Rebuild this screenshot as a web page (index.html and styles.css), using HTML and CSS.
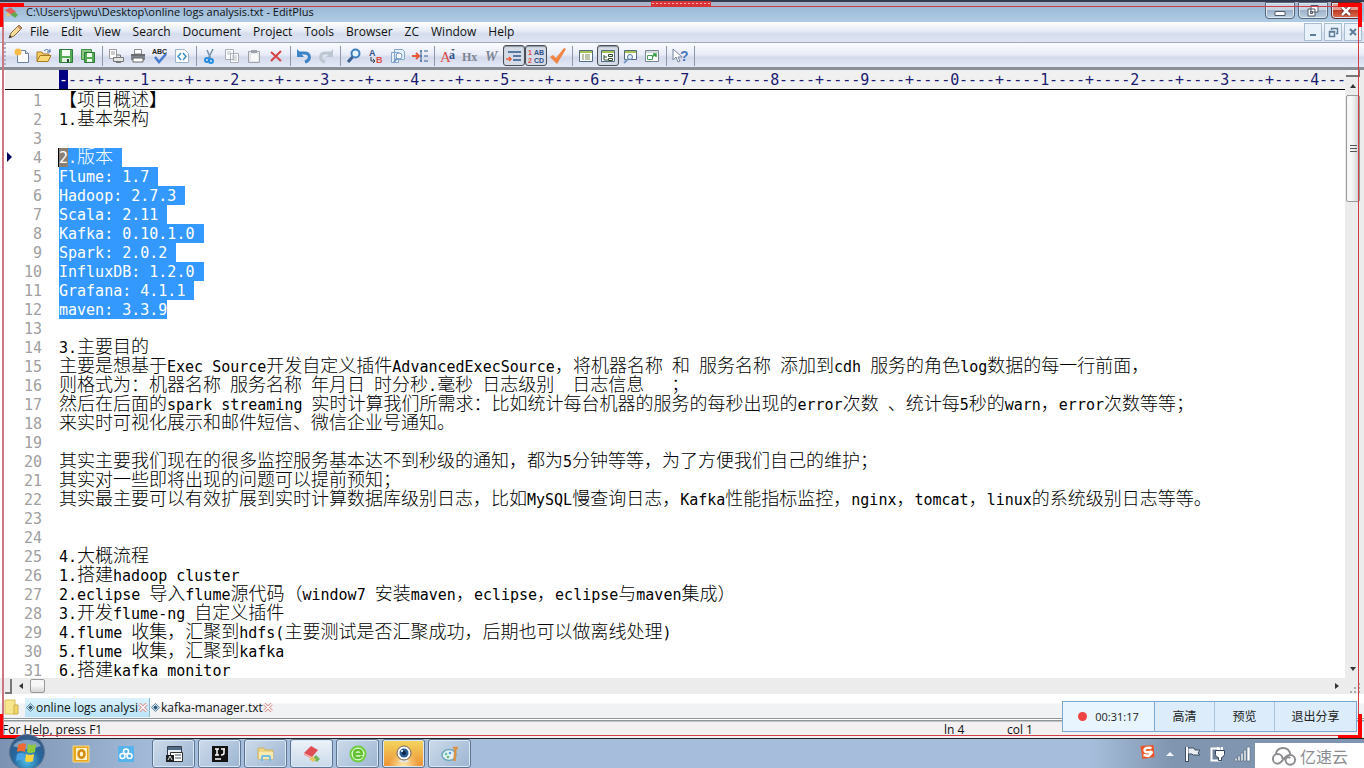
FILE: index.html
```html
<!DOCTYPE html>
<html lang="zh-CN">
<head>
<meta charset="utf-8">
<title>C:\Users\jpwu\Desktop\online logs analysis.txt - EditPlus</title>
<link rel="stylesheet" href="styles.css">
</head>
<body>
<div class="desktop">
<main class="window">
  <header class="titlebar">
    <svg class="app-icon" viewBox="0 0 16 14"><path d="M1 5l6-3 6 5-5 3z" fill="#e55a5a"/><path d="M7 10l4-3 4 3-3 3z" fill="#5faa4c"/><path d="M2 9l3-1 2 3-3 1z" fill="#e8c46c"/></svg>
    <h1 class="title">C:\Users\jpwu\Desktop\online logs analysis.txt - EditPlus</h1>
    <div class="window-buttons">
      <button aria-label="Minimize"><svg viewBox="0 0 16 12"><path d="M3 6.500h10v4H3z" fill="#fff" stroke="#535b68"/></svg></button>
      <button aria-label="Restore"><svg viewBox="0 0 16 12"><path d="M6 .5h7v6.500H6z M3 4h7v7H3z" fill="#fff" stroke="#535b68"/><path d="M5.500 6.500h2v2h-2z" fill="#9fb3c9" stroke="#535b68"/></svg></button>
      <button class="close" aria-label="Close"><svg viewBox="0 0 16 12"><path d="M4 2l8 8M12 2l-8 8" stroke="#642b2b" stroke-width="4"/><path d="M4 2l8 8M12 2l-8 8" stroke="#fff" stroke-width="2.500"/></svg></button>
    </div>
  </header>
  <nav class="menubar">
    <svg class="menu-icon" viewBox="0 0 16 16"><path d="M2 14l2-5L12 1l3 3-8 8z" fill="#f6dc9a" stroke="#8a6a3c"/><path d="M2 14l1-3 2 2z" fill="#333"/><path d="M11 2l3 3" stroke="#c78a68" stroke-width="2"/></svg>
    <button>File</button><button>Edit</button><button>View</button><button>Search</button><button>Document</button><button>Project</button><button>Tools</button><button>Browser</button><button>ZC</button><button>Window</button><button>Help</button>
    <div class="mdi-buttons">
      <button aria-label="Minimize document"><svg viewBox="0 0 12 12"><path d="M3 9h6" stroke="#5d7d99" stroke-width="2"/></svg></button>
      <button aria-label="Restore document"><svg viewBox="0 0 12 12"><path d="M4.500 4V2.500h6v5H9M2.500 5.500h5v5h-5z M2 6h6" fill="none" stroke="#5d7d99" stroke-width="1.500"/></svg></button>
      <button aria-label="Close document"><svg viewBox="0 0 12 12"><path d="M3 3l6 6M9 3l-6 6" stroke="#5d7d99" stroke-width="2"/></svg></button>
    </div>
  </nav>
  <div class="toolbar" role="toolbar">
    <button aria-label="New"><svg viewBox="0 0 16 16"><path d="M3.500 2.500h8l3 3v9h-11z" fill="#fff" stroke="#6d82a3"/><path d="M11.500 2.500v3h3" fill="#dde" stroke="#6d82a3"/><circle cx="4" cy="4" r="3.500" fill="#f8bd49"/></svg></button>
    <button aria-label="Open"><svg viewBox="0 0 16 16"><path d="M1 13V4h5l1 2h6v2" fill="#f6cf63" stroke="#a87a25"/><path d="M1 13.500l3-6h11l-3 6z" fill="#fbd976" stroke="#a87a25"/><path d="M8 3c2-2 4-2 6 1M14 1v3h-3" fill="none" stroke="#456b9c"/></svg></button>
    <button aria-label="Save"><svg viewBox="0 0 16 16"><path d="M1.500 1.500h13v13h-13z" fill="#56ab55" stroke="#2e7a3a"/><path d="M4 2h8v6H4z" fill="#f4fff2"/><path d="M4 10h8v4H4z" fill="#e4eee3"/><path d="M9 11h2v3H9z" fill="#254b35"/></svg></button>
    <button aria-label="Save all"><svg viewBox="0 0 16 16"><path d="M1.500 1.500h10v10h-10z" fill="#8bc985" stroke="#3f9146"/><path d="M4.500 4.500h10v10h-10z" fill="#56ab55" stroke="#2e7a3a"/><path d="M7 5h5v4H7zM7 11h5v3H7z" fill="#f4fff2"/></svg></button>
    <hr>
    <button aria-label="Print preview"><svg viewBox="0 0 16 16"><path d="M1.500 1.500h7v9h-7z" fill="#fff" stroke="#999"/><path d="M3 4h4M3 6h4" stroke="#999"/><path d="M5.500 9.500h10v4h-10z M8.500 7h4v2.500M8 14.500h5" fill="#e4e4e4" stroke="#777"/></svg></button>
    <button aria-label="Print"><svg viewBox="0 0 16 16"><path d="M4.500 1.500h7V6h-7z" fill="#fff" stroke="#888"/><path d="M1 6h14v6H1z" fill="#7f838b"/><path d="M3 10h10v4H3z" fill="#fff" stroke="#666"/><path d="M1 7h14" stroke="#555"/></svg></button>
    <button aria-label="Spell check"><svg viewBox="0 0 16 16"><text x="0" y="6" class="glyph tiny">ABC</text><path d="M3 9l4 5 7-8" fill="none" stroke="#477bd0" stroke-width="2.500"/></svg></button>
    <button aria-label="View in browser"><svg viewBox="0 0 16 16"><path d="M1.500 1.500h9l4 4v9h-13z" fill="#fff" stroke="#9db2c8"/><path d="M7 5L4 8.500 7 12M9 5l3 3.500L9 12" fill="none" stroke="#3d91cf" stroke-width="1.500"/></svg></button>
    <hr>
    <button aria-label="Cut"><svg viewBox="0 0 16 16"><path d="M11 1L6 11M5 2l4 9" stroke="#7390a8" stroke-width="1.500"/><circle cx="5" cy="12" r="2" fill="none" stroke="#258ee0" stroke-width="2"/><circle cx="9" cy="13" r="2" fill="none" stroke="#258ee0" stroke-width="2"/></svg></button>
    <button aria-label="Copy"><svg viewBox="0 0 16 16"><path d="M1.500 1.500h8v10h-8z M6.500 5.500h8v9h-8z" fill="#fff" stroke="#a8aeb8"/><path d="M8 8h5M8 10h5M8 12h5M3 4h4M3 6h3" stroke="#b7bbc3"/></svg></button>
    <button aria-label="Paste"><svg viewBox="0 0 16 16"><path d="M2.500 3.500h11v11h-11z" fill="#e4e6ea" stroke="#9da2ab"/><path d="M5 2h6v3H5z" fill="#9da2ab"/><path d="M5 6h7v7H5z" fill="#f8f8f8"/></svg></button>
    <button aria-label="Delete"><svg viewBox="0 0 16 16"><path d="M3 4l10 9M13 3L3 13" stroke="#d64343" stroke-width="2"/></svg></button>
    <hr>
    <button aria-label="Undo"><svg viewBox="0 0 16 16"><path d="M3 5h5c7 0 7 7 1 9" fill="none" stroke="#3b82c8" stroke-width="3"/><path d="M1 1v8h7z" fill="#3b82c8"/></svg></button>
    <button aria-label="Redo"><svg viewBox="0 0 16 16"><path d="M13 5H8c-7 0-7 7-1 9" fill="none" stroke="#bcc6d0" stroke-width="3"/><path d="M15 1v8H8z" fill="#bcc6d0"/></svg></button>
    <hr>
    <button aria-label="Find"><svg viewBox="0 0 16 16"><circle cx="9.500" cy="5.500" r="4" fill="#e4f4ff" stroke="#3d7dbf" stroke-width="2"/><path d="M6.500 9L2 14" stroke="#365e91" stroke-width="3"/></svg></button>
    <button aria-label="Replace"><svg viewBox="0 0 16 16"><text x="1" y="8" class="glyph navy">A</text><text x="8" y="15" class="glyph red">B</text><path d="M3 9v4h4M5 11l2 2-2 2" fill="none" stroke="#345"/></svg></button>
    <button aria-label="Find in files"><svg viewBox="0 0 16 16"><path d="M4.500 1.500h8l2 2v8h-10z M1.500 4.500h7v10h-7z" fill="#e5f0fb" stroke="#85a6ca"/><circle cx="9" cy="8" r="3" fill="#fff" stroke="#6d96c5"/><path d="M7 10l-3 4" stroke="#6d96c5" stroke-width="2"/></svg></button>
    <button aria-label="Go to line"><svg viewBox="0 0 16 16"><path d="M0 8h6M4 5l3 3-3 3" fill="none" stroke="#e85a36" stroke-width="2"/><path d="M8 3h2M8 8h2M8 13h2M9 2v12M12 3h4M12 8h4M12 13h4" stroke="#345c92"/></svg></button>
    <hr>
    <button aria-label="Font"><svg viewBox="0 0 16 16"><text x="0" y="14" class="glyph serif red">A</text><text x="9" y="11" class="glyph serif-small navy">a</text><path d="M11 1h4l-2 2z" fill="#567"/></svg></button>
    <button aria-label="Hex viewer"><svg viewBox="0 0 16 16"><text x="0" y="13" class="glyph serif-small gray">Hx</text></svg></button>
    <button aria-label="Word wrap"><svg viewBox="0 0 16 16"><text x="1" y="13" class="glyph serif-italic gray">W</text></svg></button>
    <button class="pressed" aria-label="Auto indent" aria-pressed="true"><svg viewBox="0 0 16 16"><path d="M2 4h13M7 8h8M7 12h8" stroke="#305890" stroke-width="1.500"/><path d="M0 11h5M3 9l2 2-2 2" fill="none" stroke="#e65f38" stroke-width="1.500"/></svg></button>
    <button class="pressed" aria-label="Line numbers" aria-pressed="true"><svg viewBox="0 0 16 16"><text x="0" y="7" class="glyph tiny red">1</text><text x="6" y="7" class="glyph tiny navy">AB</text><text x="0" y="15" class="glyph tiny red">2</text><text x="6" y="15" class="glyph tiny navy">CD</text></svg></button>
    <button aria-label="Preferences"><svg viewBox="0 0 16 16"><path d="M0 9l3-2 3 3 8-10 2 1L7 16z" fill="#f08444"/></svg></button>
    <hr>
    <button aria-label="Cliptext"><svg viewBox="0 0 16 16"><path d="M1.500 2.500h13v11h-13z" fill="#fff" stroke="#526b82"/><path d="M2 3h12v2H2z" fill="#a5c253"/><path d="M4 7h2M4 9h2M4 11h2M7 7h5M7 9h5M7 11h5" stroke="#798b57"/></svg></button>
    <button class="pressed" aria-label="Directory" aria-pressed="true"><svg viewBox="0 0 16 16"><path d="M1.500 2.500h13v11h-13z" fill="#fff" stroke="#526b82"/><path d="M2 3h12v2H2z" fill="#a5c253"/><path d="M4 7v5h4M4 9h3M8.500 6.500h4v2h-4zM8.500 10.500h4v2h-4z" fill="none" stroke="#354f30"/></svg></button>
    <button aria-label="Output window"><svg viewBox="0 0 16 16"><path d="M2.500 2.500h12v9h-12z" fill="#fff" stroke="#526b82"/><path d="M3 3h11v2H3z" fill="#a5c253"/><circle cx="8" cy="9" r="2.500" fill="#e1efff" stroke="#587da8"/><path d="M6 11l-4 4" stroke="#7d9dc4" stroke-width="2"/></svg></button>
    <button aria-label="New window"><svg viewBox="0 0 16 16"><path d="M1.500 2.500h13v11h-13z" fill="#fff" stroke="#7a8790"/><path d="M2 4h12" stroke="#aab4bc"/><path d="M3.500 7.500h5v4h-5z" fill="none" stroke="#4a9b55"/><path d="M8 9l4-3M9 6h3v3" fill="none" stroke="#35a044" stroke-width="1.500"/></svg></button>
    <hr>
    <button aria-label="Context help"><svg viewBox="0 0 16 16"><path d="M1 1v11l3-3 2 5 2-1-2-4h4z" fill="#fff" stroke="#7385a0"/><text x="8" y="13" class="glyph help">?</text></svg></button>
    <hr>
  </div>
  <section class="workspace">
    <div class="document">
      <div class="ruler" aria-hidden="true"><span><mark>-</mark>---+----1</span><span>----+----2</span><span>----+----3</span><span>----+----4</span><span>----+----5</span><span>----+----6</span><span>----+----7</span><span>----+----8</span><span>----+----9</span><span>----+----0</span><span>----+----1</span><span>----+----2</span><span>----+----3</span><span>----+----4</span><span>---</span></div>
      <ol class="lines">
        <li><code><b>【项目概述】</b></code></li>
        <li><code>1.<b>基本架构</b></code></li>
        <li><code></code></li>
        <li class="current"><code><mark><i class="caret">2</i>.<b>版本</b> </mark></code></li>
        <li><code><mark>Flume: 1.7 </mark></code></li>
        <li><code><mark>Hadoop: 2.7.3 </mark></code></li>
        <li><code><mark>Scala: 2.11 </mark></code></li>
        <li><code><mark>Kafka: 0.10.1.0 </mark></code></li>
        <li><code><mark>Spark: 2.0.2 </mark></code></li>
        <li><code><mark>InfluxDB: 1.2.0 </mark></code></li>
        <li><code><mark>Grafana: 4.1.1 </mark></code></li>
        <li><code><mark>maven: 3.3.9</mark></code></li>
        <li><code></code></li>
        <li><code>3.<b>主要目的</b></code></li>
        <li><code><b>主要是想基于</b>Exec Source<b>开发自定义插件</b>AdvancedExecSource<b>，将机器名称</b> <b>和</b> <b>服务名称</b> <b>添加到</b>cdh <b>服务的角色</b>log<b>数据的每一行前面，</b></code></li>
        <li><code><b>则格式为：机器名称</b> <b>服务名称</b> <b>年月日</b> <b>时分秒</b>.<b>毫秒</b> <b>日志级别</b>  <b>日志信息</b>   <b>；</b></code></li>
        <li><code><b>然后在后面的</b>spark streaming <b>实时计算我们所需求：比如统计每台机器的服务的每秒出现的</b>error<b>次数</b> <b>、统计每</b>5<b>秒的</b>warn<b>，</b>error<b>次数等等；</b></code></li>
        <li><code><b>来实时可视化展示和邮件短信、微信企业号通知。</b></code></li>
        <li><code></code></li>
        <li><code><b>其实主要我们现在的很多监控服务基本达不到秒级的通知，都为</b>5<b>分钟等等，为了方便我们自己的维护；</b></code></li>
        <li><code><b>其实对一些即将出现的问题可以提前预知；</b></code></li>
        <li><code><b>其实最主要可以有效扩展到实时计算数据库级别日志，比如</b>MySQL<b>慢查询日志，</b>Kafka<b>性能指标监控，</b>nginx<b>，</b>tomcat<b>，</b>linux<b>的系统级别日志等等。</b></code></li>
        <li><code></code></li>
        <li><code></code></li>
        <li><code>4.<b>大概流程</b></code></li>
        <li><code>1.<b>搭建</b>hadoop cluster</code></li>
        <li><code>2.eclipse <b>导入</b>flume<b>源代码（</b>window7 <b>安装</b>maven<b>，</b>eclipse<b>，</b>eclipse<b>与</b>maven<b>集成）</b></code></li>
        <li><code>3.<b>开发</b>flume-ng <b>自定义插件</b></code></li>
        <li><code>4.flume <b>收集，汇聚到</b>hdfs(<b>主要测试是否汇聚成功，后期也可以做离线处理</b>)</code></li>
        <li><code>5.flume <b>收集，汇聚到</b>kafka</code></li>
        <li><code>6.<b>搭建</b>kafka monitor</code></li>
      </ol>
    </div>
    <div class="vscroll"><span class="split"></span><button class="arrow up" aria-label="Scroll up"></button><div class="thumb"><i></i><i></i><i></i></div><button class="arrow down" aria-label="Scroll down"></button></div>
  </section>
  <div class="hscroll"><span class="split"></span><button class="arrow left" aria-label="Scroll left"></button><div class="thumb"></div><button class="arrow right" aria-label="Scroll right"></button><span class="grip"></span></div>
  <div class="tabs">
    <svg class="folder" viewBox="0 0 16 16"><path d="M1 1h10v14H1z" fill="#f8e68d" stroke="#dbc25e"/><path d="M10 6h4v9h-4z" fill="#f3d766" stroke="#c9ae4e"/></svg>
    <button class="tab active"><svg class="diamond" viewBox="0 0 10 10"><path d="M5 .5L9.500 5 5 9.500.5 5z" fill="#cfe4f2" stroke="#537a95"/><path d="M5 2.500L7.500 5 5 7.500 2.500 5z" fill="#28536e"/></svg><span>online logs analysi</span><svg class="tab-close" viewBox="0 0 10 10"><path d="M1 1l8 8M9 1L1 9" stroke="#d98b8b" stroke-width="3.500"/><path d="M1 1l8 8M9 1L1 9" stroke="#fff" stroke-width="1.500"/></svg></button>
    <button class="tab"><svg class="diamond" viewBox="0 0 10 10"><path d="M5 .5L9.500 5 5 9.500.5 5z" fill="#cfe4f2" stroke="#537a95"/><path d="M5 2.500L7.500 5 5 7.500 2.500 5z" fill="#28536e"/></svg><span>kafka-manager.txt</span><svg class="tab-close" viewBox="0 0 10 10"><path d="M1 1l8 8M9 1L1 9" stroke="#d98b8b" stroke-width="3.500"/><path d="M1 1l8 8M9 1L1 9" stroke="#fff" stroke-width="1.500"/></svg></button>
  </div>
  <footer class="statusbar"><span class="hint">For Help, press F1</span><span class="cell">ln 4</span><span class="cell">col 1</span><span class="rest"></span></footer>
  <div class="share-frame" aria-hidden="true"><i class="corner tl"></i><i class="corner tr"></i><i class="corner bl"></i><i class="corner br"></i><i class="handle"></i></div>
  <aside class="share-panel"><span class="timer"><i></i>00:31:17</span><button>高清</button><button>预览</button><button class="wide">退出分享</button></aside>
</main>
<footer class="taskbar">
  <button class="start" aria-label="Start"><svg viewBox="0 0 38 38"><defs><radialGradient id="orb" cx="50%" cy="75%" r="75%"><stop offset="0" stop-color="#4fc3e8"/><stop offset=".5" stop-color="#2668a0"/><stop offset="1" stop-color="#375780"/></radialGradient></defs><circle cx="19" cy="19" r="17.500" fill="url(#orb)" stroke="#5d7390"/><path d="M5 13a16 12 0 0 1 28 0q-14 6-28 0z" fill="#cfdeed" opacity=".5"/><path d="M10 12q4-3 8-1l-1 8q-4-2-8 0z" fill="#ef6b33"/><path d="M20 11q4 2 8 0l-1 8q-5 2-8 0z" fill="#8fc93f"/><path d="M9 21q4-2 8 0l-1 7q-4-2-8 0z" fill="#4aa3e8"/><path d="M18 21q4 2 8 0l-1 7q-4 2-8 0z" fill="#ffd33f"/></svg></button>
  <button class="pin" aria-label="Outlook"><svg viewBox="0 0 18 18"><path d="M1 1h16v16H1z" fill="#e9a91f" stroke="#f7d983"/><path d="M4 3h11v12H4z" fill="#fff3cc"/><ellipse cx="9.500" cy="9" rx="3" ry="3.800" fill="none" stroke="#d58b10" stroke-width="2.500"/></svg></button>
  <button class="pin" aria-label="Cloud drive"><svg viewBox="0 0 18 18"><path d="M1 1h16v16H1z" fill="#55b4ec"/><circle cx="5.500" cy="11" r="2.500" fill="none" stroke="#fff" stroke-width="1.500"/><circle cx="12.500" cy="11" r="2.500" fill="none" stroke="#fff" stroke-width="1.500"/><circle cx="9" cy="6.500" r="2.500" fill="none" stroke="#fff" stroke-width="1.500"/></svg></button>
  <div class="tasks">
    <button aria-label="Terminal"><svg viewBox="0 0 18 18"><path d="M2.500 1.500h14v10h-14z" fill="#e6edf4" stroke="#333c48"/><path d="M3 2h13v3H3z" fill="#526a86"/><path d="M5.500 7.500h12v9h-12z" fill="#fff" stroke="#333"/><path d="M1 10h8v7H1z" fill="#1d2022"/><path d="M3 15l2-4 2 4" fill="none" stroke="#ddd"/><path d="M10 10h6M10 13h6" stroke="#456"/></svg></button>
    <button aria-label="IntelliJ IDEA"><svg viewBox="0 0 18 18"><path d="M1 1h16v16H1z" fill="#121212"/><path d="M4 4h4M6 4v6M4 10h4M10 4h4M13 4v4q0 2-3 2M4 14h6" fill="none" stroke="#fff" stroke-width="1.500"/></svg></button>
    <button aria-label="Explorer"><svg viewBox="0 0 18 18"><path d="M1 3h6l1 2h8v9H1z" fill="#efd684" stroke="#cbb365"/><path d="M2 7h14v7H2z" fill="#f9eab2"/><path d="M4 16v-4q0-2 2-2h6q2 0 2 2v4h-2v-4H6v4z" fill="#74bce1"/></svg></button>
    <button class="lit" aria-label="EditPlus"><svg viewBox="0 0 18 18"><path d="M1 8l7-7 7 4-6 7z" fill="#df4d55"/><path d="M1 8l8 4v2L1 10z" fill="#f2a1a1"/><path d="M9 14l4-4 4 4-3 3z" fill="#73b75d"/><path d="M6 14l4-3 3 4-3 2z" fill="#e6c568"/></svg></button>
    <button aria-label="Browser"><svg viewBox="0 0 18 18"><circle cx="9" cy="9" r="7.500" fill="#e9ffe0" stroke="#6dcc3d" stroke-width="2"/><path d="M5 9h8q0-4-4-4T5 9t4 4q3 0 4-2" fill="none" stroke="#62c02f" stroke-width="2.500"/></svg></button>
    <button class="hot" aria-label="Webcam"><svg viewBox="0 0 18 18"><ellipse cx="9" cy="16" rx="5" ry="1.500" fill="#e8e5dc"/><circle cx="9" cy="8" r="7" fill="#fff" stroke="#656565"/><circle cx="9" cy="8" r="4.500" fill="#285b91"/><circle cx="9" cy="8" r="2" fill="#0a2244"/><circle cx="7" cy="6" r="1" fill="#fff"/></svg></button>
    <button aria-label="Paint"><svg viewBox="0 0 18 18"><ellipse cx="8" cy="10" rx="7" ry="5.500" fill="#e1f0f4" stroke="#71a6ba" stroke-width="1.500"/><circle cx="5" cy="9" r="1.300" fill="#6ac5a4"/><circle cx="9" cy="8" r="1.300" fill="#5a9fdd"/><circle cx="7" cy="12" r="1.300" fill="#70bb70"/><path d="M12 3h5M14.500 3l-1 13" stroke="#d99347" stroke-width="2.500"/></svg></button>
  </div>
  <div class="tray">
    <svg class="sogou" viewBox="0 0 16 16"><path d="M1 2l13-1 1 12-12 2z" fill="#ee5425"/><path d="M12 4Q5 3 5 6t5 2-1 4l-5-1" fill="none" stroke="#fff" stroke-width="2.500"/></svg>
    <svg class="chevron" viewBox="0 0 8 8"><path d="M0 6l4-4 4 4z" fill="#f3f7fb"/></svg>
    <svg viewBox="0 0 18 16"><path d="M3 1v15" stroke="#3f4f63" stroke-width="4"/><path d="M4 2h6l1 2h5l-2 3 2 2H9L8 8H4z" fill="#e9eef3" stroke="#3f4f63"/><path d="M3 1v14" stroke="#fff" stroke-width="2"/></svg>
    <svg viewBox="0 0 18 16"><path d="M2.500 2.500h8v12h-8z" fill="#71839b" stroke="#fff" stroke-width="2"/><path d="M9 1v4M13 1v4" stroke="#fff" stroke-width="2"/><path d="M6.500 4.500h9v4q-1 3-3 3v3h-3v-3q-3 0-3-3z" fill="#fff" stroke="#35455a"/></svg>
    <svg viewBox="0 0 18 16"><path d="M1 12h2v3H1zM4 10h2v5H4zM7 7h2v8H7zM10 4h2v11h-2zM13 1h3v14h-3z" fill="#fff" stroke="#56677e" stroke-width=".6"/></svg>
  </div>
  <div class="brand"><svg viewBox="0 0 28 20"><path d="M12 13a5 5 0 1 0-5 5c5 0 6-9 13-9a5 5 0 1 1-5 5a3 3 0 0 1 5-2M5 8C6 0 18-1 20 8" fill="none" stroke="#8c8d91" stroke-width="2"/></svg><span>亿速云</span></div>
</footer>
</div>
</body>
</html>
```
FILE: styles.css
```css
* { box-sizing: border-box; }
html, body { height: 100%; margin: 0; }
body { overflow: hidden; font: 12px/16px "Open Sans", "Noto Sans CJK SC", sans-serif; color: #111; }
button { font: inherit; color: inherit; background: none; border: 0; padding: 0; margin: 0; }
svg { display: block; flex: none; }
.desktop { height: 100vh; display: flex; flex-direction: column; }
.window { position: relative; flex: 1; min-height: 0; display: flex; flex-direction: column; background: #fff; border-bottom: 1px solid #222; }

.titlebar { display: flex; flex: none; height: 22px; align-items: center; padding: 0 3px 0 4px; border-top: 2px solid #353c52; background: linear-gradient(#a9b4c8 0 3px, #9bb8d6 5px, #b0cce5); }
.app-icon { width: 15px; height: 14px; margin-right: 7px; }
.title { flex: 1; margin: 0; font-size: 11px; font-weight: 400; line-height: 18px; white-space: nowrap; }
.window-buttons { display: flex; gap: 3px; align-self: flex-start; }
.window-buttons button { width: 30px; height: 17px; border: 1px solid #56667c; border-radius: 0 0 4px 4px; background: linear-gradient(#c8d5e3 45%, #9db2ca 50%, #bdd0e2); box-shadow: inset 0 0 0 1px #dce6ef; display: grid; place-items: center; }
.window-buttons svg { width: 16px; height: 12px; }
.window-buttons .close { background: linear-gradient(#e19c8e 45%, #bf3b26 50%, #db7050); border-color: #65262a; }

.menubar { display: flex; flex: none; height: 20px; align-items: center; padding: 0 2px 0 7px; background: linear-gradient(#fff, #e5eaf5 45%, #d5dcec 60%, #dfe5f3); }
.menu-icon { width: 16px; height: 16px; margin-right: 1px; }
.menubar > button { padding: 0 6px; height: 20px; }
.mdi-buttons { margin-left: auto; display: flex; gap: 2px; }
.mdi-buttons button { width: 18px; height: 18px; border: 1px solid #a9bed1; background: #e9f1fa; display: grid; place-items: center; }
.mdi-buttons svg { width: 12px; height: 12px; }

.toolbar { display: flex; flex: none; height: 28px; align-items: center; padding: 1px 0 0 11px; border-top: 1px solid #9fa8bd; border-bottom: 3px solid #8a8e97; background: radial-gradient(circle at 2px 2px, #a9b2c6 1px, transparent 1px) 3px 3px / 4px 4px repeat-y, linear-gradient(#fbfcff, #e9ecf7 48%, #d3daeb 60%, #e4e9f6); }
.toolbar button { width: 22px; height: 21px; display: grid; place-items: center; border-radius: 3px; }
.toolbar button.pressed { border: 1px solid #4c5159; background: #d6dce7; box-shadow: inset 0 1px 1px #8c94a1; }
.toolbar svg { width: 16px; height: 16px; }
.toolbar hr { width: 1px; height: 20px; margin: 0 2px 0 3px; border: 0; background: #8d96aa; }
.glyph { font: bold 9px "Liberation Sans", sans-serif; fill: #222; }
.glyph.tiny { font-size: 7px; }
.glyph.serif { font: 15px "Liberation Serif", serif; }
.glyph.serif-small { font: bold 12px "Liberation Serif", serif; }
.glyph.serif-italic { font: italic bold 14px "Liberation Serif", serif; }
.glyph.help { font-size: 14px; fill: #4678c0; }
.glyph.red { fill: #dc4c45; }
.glyph.navy { fill: #2f4f8a; }
.glyph.gray { fill: #7d8592; }

.workspace { flex: 1; min-height: 0; display: flex; padding-left: 5px; }
.document { flex: 1; min-width: 0; display: flex; flex-direction: column; overflow: hidden; }
.ruler { flex: none; display: flex; height: 20px; padding-left: 54px; overflow: hidden; background: #f0f0f0; border-bottom: 1px solid #000; color: #1c1c72; font: 15px/21px "DejaVu Sans Mono", monospace; white-space: pre; }
.ruler span { flex: 0 0 90px; min-width: 0; }
.ruler mark { display: inline-block; height: 19px; background: #000080; color: #fff; }
.lines { flex: 1; min-height: 0; margin: 0; padding: 1px 0 0; overflow: hidden; list-style: none; counter-reset: line; }
.lines li { display: flex; height: 19px; counter-increment: line; font: 15px/20px "DejaVu Sans Mono", monospace; color: #000; position: relative; }
.lines li::before { content: counter(line); width: 37px; margin-right: 17px; text-align: right; color: #a0a0a0; }
.lines .current::after { content: ""; position: absolute; left: 2px; top: 4px; border: 5px solid transparent; border-left-color: #000060; border-right: 0; }
.lines code { height: 19px; font: inherit; white-space: pre; }
.lines b { font: 18px/1px "Noto Sans CJK SC", sans-serif; font-weight: 300; }
.lines mark { display: inline-block; height: 19px; background: #3399ff; color: #fff; }
.caret { display: inline-block; height: 19px; font-style: normal; background: #8b7f72; box-shadow: -1px 0 #000; }

.vscroll { flex: none; width: 19px; display: flex; flex-direction: column; align-items: center; background: #ececec; padding: 0 4px 0 1px; }
.vscroll .split { width: 100%; height: 7px; border: solid #777; border-width: 0 2px 2px 0; background: #f4f4f4; }
.arrow { width: 14px; height: 18px; display: grid; place-items: center; }
.arrow::before { content: ""; border: 3px solid transparent; }
.up::before { border-bottom: 4px solid #333; border-top: 0; }
.down::before { border-top: 4px solid #333; border-bottom: 0; }
.left::before { border-right: 4px solid #333; border-left: 0; }
.right::before { border-left: 4px solid #333; border-right: 0; }
.vscroll .thumb { flex: 0 1 107px; width: 14px; display: flex; flex-direction: column; align-items: center; justify-content: center; gap: 2px; border: 1px solid #999; border-radius: 2px; background: linear-gradient(90deg, #f7f7f7 40%, #cfcfcf); }
.vscroll .thumb i { width: 7px; height: 1px; background: #555; }
.vscroll .down { margin-top: auto; }
.hscroll { flex: none; height: 16px; display: flex; align-items: center; padding: 0 4px 0 5px; background: #ececec; }
.hscroll .split { width: 7px; height: 15px; border: solid #777; border-width: 0 2px 2px 0; }
.hscroll .left { width: 18px; }
.hscroll .thumb { width: 15px; height: 14px; border: 1px solid #999; border-radius: 2px; background: linear-gradient(#f7f7f7 45%, #d4d4d4); }
.hscroll .right { width: 18px; margin-left: auto; }
.hscroll .grip { width: 14px; height: 14px; background: linear-gradient(135deg, #ececec 60%, transparent 60%), radial-gradient(circle at 1px 1px, #aaa 1px, transparent 1px) 0 0 / 4px 4px; }

.tabs { flex: none; height: 24px; display: flex; align-items: flex-end; padding: 0 4px 1px; background: linear-gradient(#fff 9px, #f1f2f4 10px); }
.folder { width: 16px; height: 16px; margin: 0 5px 2px 0; }
.tab { height: 19px; display: flex; align-items: center; padding: 0 1px; white-space: nowrap; }
.tab.active { background: linear-gradient(#dcf3fe, #b9e3f7); border-right: 1px solid #8fb9cc; }
.diamond { width: 9px; height: 9px; margin-right: 1px; }
.tab-close { width: 10px; height: 9px; }
.statusbar { flex: none; height: 20px; display: flex; align-items: flex-end; padding: 0 2px 1px; line-height: 15px; border-top: 1px solid #8f9699; background: linear-gradient(#fff 1px, #8f9699 1px 2px, #f2f0f0 3px); }
.hint { flex: 1; }
.cell { flex: 0 0 63px; }
.rest { flex: 0 0 292px; }

.share-frame { position: absolute; inset: 6px 5px 2px 2px; border: 1px solid #d23c46; border-left: 2px solid #cc7682; pointer-events: none; }
.corner { position: absolute; width: 24px; height: 24px; border: 0 solid #f00; }
.tl { top: -4px; left: -4px; border-width: 4px 0 0 3px; }
.tr { top: -4px; right: -4px; border-width: 4px 4px 0 0; }
.bl { bottom: -3px; left: -4px; border-width: 0 0 3px 3px; }
.br { bottom: -3px; right: -4px; border-width: 0 4px 3px 0; }
.handle { position: absolute; top: -6px; left: 50%; width: 60px; height: 6px; margin-left: -30px; background: radial-gradient(circle, #f7b3b3 1px, transparent 1px) 0 0 / 4px 5px, #d93338; }
.share-panel { position: absolute; right: 7px; bottom: 6px; display: flex; height: 31px; border: 1px solid #79a9d3; background: #dcecfa; color: #222; }
.share-panel .timer { width: 92px; display: flex; align-items: center; justify-content: center; gap: 8px; font-size: 11px; background: #e8f4fe; border-right: 1px solid #79a9d3; }
.timer i { width: 9px; height: 9px; border-radius: 50%; background: #ee4444; }
.share-panel button { width: 60px; border-right: 1px solid #a9c4dc; }
.share-panel .wide { width: 81px; border-right: 0; }

.taskbar { flex: none; height: 29px; display: flex; align-items: stretch; background: linear-gradient(90deg, #7c92b2, #a6bedb 12%, #a6bedb 80%, #8095af 86%); }
.start { width: 38px; height: 38px; margin: -6px 16px 0 8px; position: relative; }
.start svg { width: 38px; height: 38px; }
.pin { width: 38px; margin-right: 7px; display: grid; place-items: center; }
.pin svg, .tasks svg { width: 18px; height: 18px; }
.tasks { display: flex; gap: 3px; margin-right: auto; }
.tasks button { width: 43px; display: grid; place-items: center; border: 1px solid #5b7595; border-radius: 3px; box-shadow: inset 0 0 0 1px #dce8f4; background: linear-gradient(135deg, #cddbeb, #9cb5d1); }
.tasks .lit { background: linear-gradient(#edf3f9, #c9d9ea); }
.tasks .hot { background: radial-gradient(circle at 50% 100%, #fff0b0, transparent 45%), linear-gradient(#f3d65e, #ed9136); }
.tray { display: flex; align-items: center; gap: 7px; padding-right: 3px; }
.tray svg { width: 18px; height: 16px; }
.tray .sogou { width: 17px; margin-right: 3px; align-self: flex-start; margin-top: 5px; }
.tray .chevron { width: 8px; height: 8px; margin-right: 3px; }
.brand { align-self: flex-end; width: 109px; height: 25px; display: flex; align-items: center; justify-content: center; gap: 2px; background: #fff; color: #8c8d91; font: 16px/24px "Noto Sans CJK SC", sans-serif; }
.brand svg { width: 27px; height: 20px; }
```
